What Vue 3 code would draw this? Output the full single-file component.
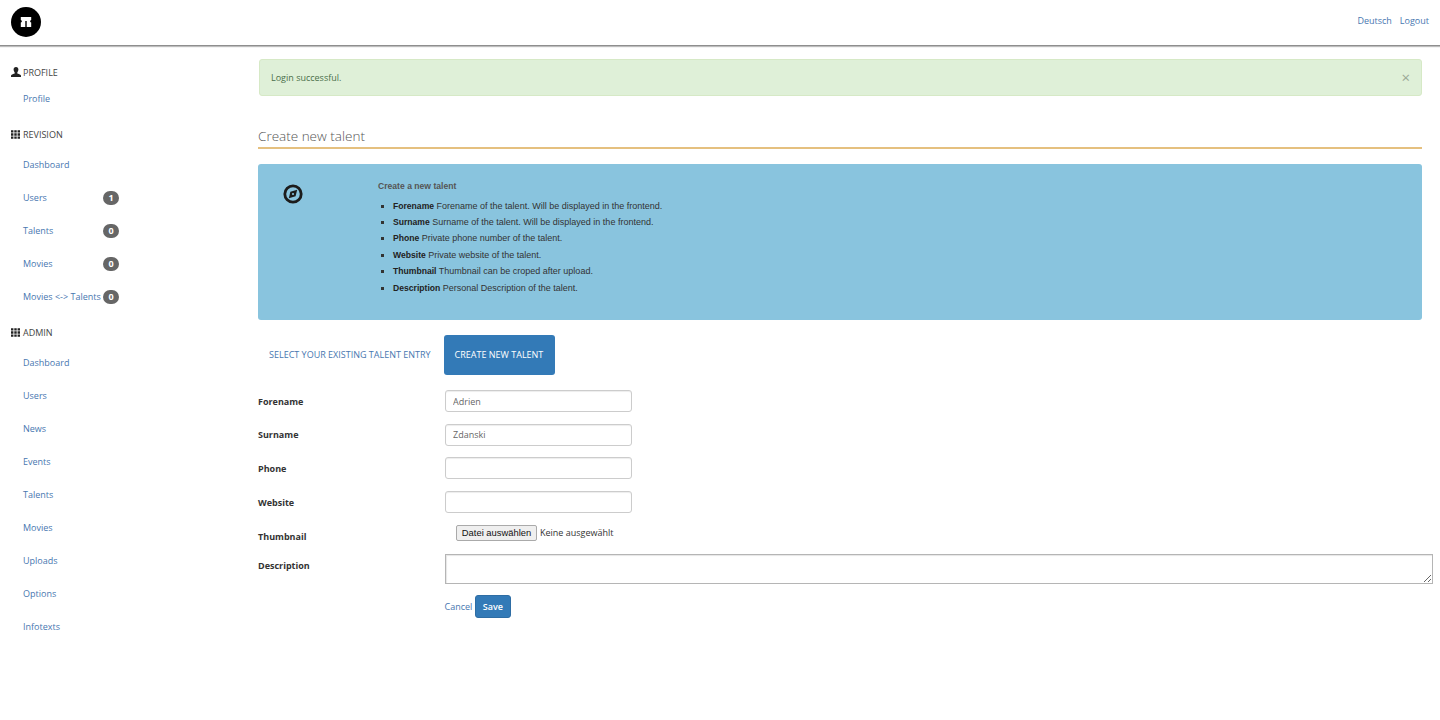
<script setup>
const revision = [
  { label: 'Dashboard' },
  { label: 'Users', badge: 1 },
  { label: 'Talents', badge: 0 },
  { label: 'Movies', badge: 0 },
  { label: 'Movies <-> Talents', badge: 0 },
]
const admin = ['Dashboard', 'Users', 'News', 'Events', 'Talents', 'Movies', 'Uploads', 'Options', 'Infotexts']
const help = [
  ['Forename', 'Forename of the talent. Will be displayed in the frontend.'],
  ['Surname', 'Surname of the talent. Will be displayed in the frontend.'],
  ['Phone', 'Private phone number of the talent.'],
  ['Website', 'Private website of the talent.'],
  ['Thumbnail', 'Thumbnail can be croped after upload.'],
  ['Description', 'Personal Description of the talent.'],
]
const gridPath = 'M0 .2h2.700v2.700H0zM3.650 .2h2.700v2.700H3.650zM7.300 .2H10v2.700H7.300zM0 3.650h2.700v2.700H0zM3.650 3.650h2.700v2.700H3.650zM7.300 3.650H10v2.700H7.300zM0 7.100h2.700v2.700H0zM3.650 7.100h2.700v2.700H3.650zM7.300 7.100H10v2.700H7.300z'
</script>

<template>
  <div class="page">
    <header class="top">
      <a class="logo" aria-label="Logo">
        <svg viewBox="0 0 30 30" width="30" height="30">
          <circle cx="15" cy="15" r="15" fill="#000" />
          <path d="M9.800 10h10.400v3c-.9.400-1.100 1-1 2l1 .4v4.600h-4.500v-6h-1.400v6H9.800v-4.600l1-.4c.1-1-.1-1.600-1-2z" fill="#fff" />
        </svg>
      </a>
      <nav class="top-links">
        <a>Deutsch</a>
        <a>Logout</a>
      </nav>
    </header>

    <div class="body">
      <aside class="side">
        <h4 class="side-head first">
          <svg viewBox="0 0 10 10" width="10" height="10"><path d="M5 0c1.600 0 2.400 1 2.400 2.600 0 1.200-.5 2.200-1.100 2.800v1c.9.400 3.200.8 3.700 2V10H0V8.400c.5-1.200 2.800-1.600 3.700-2v-1C3.100 4.800 2.600 3.800 2.600 2.600 2.600 1 3.400 0 5 0z" fill="#222" /></svg>
          PROFILE
        </h4>
        <ul class="side-list first-list">
          <li><a>Profile</a></li>
        </ul>

        <h4 class="side-head">
          <svg class="grid-ico" viewBox="0 0 10 10" width="9" height="9"><path :d="gridPath" fill="#222" /></svg>
          REVISION
        </h4>
        <ul class="side-list">
          <li v-for="item in revision" :key="item.label">
            <a>{{ item.label }}</a>
            <span v-if="item.badge !== undefined" class="badge">{{ item.badge }}</span>
          </li>
        </ul>

        <h4 class="side-head">
          <svg class="grid-ico" viewBox="0 0 10 10" width="9" height="9"><path :d="gridPath" fill="#222" /></svg>
          ADMIN
        </h4>
        <ul class="side-list">
          <li v-for="label in admin" :key="label"><a>{{ label }}</a></li>
        </ul>
      </aside>

      <main class="main">
        <div class="alert">
          <span>Login successful.</span>
          <span class="close">×</span>
        </div>

        <h2 class="title">Create new talent</h2>

        <section class="info">
          <div class="info-ico">
            <svg viewBox="0 0 20 20" width="20" height="20">
              <circle cx="10" cy="10" r="8.200" fill="none" stroke="#1c1c1c" stroke-width="2.800" />
              <path d="M14.200 5.800l-1.600 6.400L5.800 14.200l1.600-6.400z" fill="#1c1c1c" />
              <circle cx="10" cy="10" r="1.100" fill="#8ac4de" />
            </svg>
          </div>
          <div class="info-text">
            <strong class="info-title">Create a new talent</strong>
            <ul>
              <li v-for="row in help" :key="row[0]"><b>{{ row[0] }}</b> {{ row[1] }}</li>
            </ul>
          </div>
        </section>

        <div class="tabs">
          <a class="tab">SELECT YOUR EXISTING TALENT ENTRY</a>
          <a class="tab active">CREATE NEW TALENT</a>
        </div>

        <form class="form" @submit.prevent>
          <div class="row">
            <label>Forename</label>
            <input class="field" type="text" value="Adrien" />
          </div>
          <div class="row">
            <label>Surname</label>
            <input class="field" type="text" value="Zdanski" />
          </div>
          <div class="row">
            <label>Phone</label>
            <input class="field" type="text" />
          </div>
          <div class="row">
            <label>Website</label>
            <input class="field" type="text" />
          </div>
          <div class="row file-row">
            <label>Thumbnail</label>
            <div class="file">
              <button type="button" class="file-btn">Datei auswählen</button>
              <span>Keine ausgewählt</span>
            </div>
          </div>
          <div class="row desc-row">
            <label>Description</label>
            <textarea class="area"></textarea>
          </div>
          <div class="actions">
            <a>Cancel</a>
            <button type="submit" class="save">Save</button>
          </div>
        </form>
      </main>
    </div>
  </div>
</template>

<style>
html, body { margin: 0; background: #fff; }
</style>

<style scoped>
.page {
  font-family: "Open Sans", sans-serif;
  font-size: 9px;
  color: #333;
  min-height: 720px;
  overflow: hidden;
}
a { color: #4877b0; text-decoration: none; }
ul { list-style: none; margin: 0; padding: 0; }

.top {
  height: 45px;
  display: flex;
  align-items: center;
  justify-content: space-between;
  padding: 0 11px;
  border-bottom: 1px solid #8e8e8e;
  box-shadow: 0 1px 1px #bdbdbd;
  box-sizing: content-box;
}
.logo { display: block; height: 30px; margin-top: -1px; }
.top-links { display: flex; gap: 8px; margin-top: -5px; }

.body { display: flex; }
.side { width: 258px; flex: none; padding: 0 0 0 11px; box-sizing: border-box; }
.side-head {
  display: flex;
  align-items: center;
  gap: 2px;
  margin: 12px 0 0;
  height: 14px;
  font-weight: 400;
  font-size: 9px;
  color: #444;
}
.side-head.first { margin-top: 19px; }
.grid-ico { margin-right: 1px; }
.side-list { margin-top: 7px; }
.side-list.first-list { margin-top: 3px; }
.side-list li {
  display: flex;
  align-items: center;
  justify-content: space-between;
  box-sizing: border-box;
  width: 108px;
  height: 33px;
  padding-left: 12px;
}
.badge {
  width: 16px;
  height: 14px;
  border-radius: 7px;
  background: #666;
  color: #fff;
  font-weight: 700;
  font-size: 9px;
  line-height: 14px;
  text-align: center;
}

.main { width: 1164px; flex: none; padding-top: 13px; }
.alert {
  height: 35px;
  display: flex;
  align-items: center;
  justify-content: space-between;
  padding: 0 11px;
  margin-left: 1px;
  background: #dff0d8;
  border: 1px solid #d6e9c6;
  border-radius: 3px;
  color: #4a6f4a;
}
.close { font-size: 15px; color: #9aa896; margin-top: -1px; }
.title {
  margin: 30px 0 0;
  padding-bottom: 1px;
  font-size: 13.500px;
  font-weight: 300;
  line-height: 20px;
  color: #555;
  border-bottom: 2px solid #e5c07f;
}
.info {
  display: flex;
  margin-top: 15px;
  height: 156px;
  background: #89c4de;
  border-radius: 3px;
  font-family: "Liberation Sans", Arial, sans-serif;
}
.info-ico { width: 120px; flex: none; padding: 20px 0 0 25px; box-sizing: border-box; }
.info-text { padding-top: 17px; }
.info-title { display: block; color: #555; font-size: 8.600px; line-height: 11px; }
.info-text ul { margin-top: 5.500px; padding-left: 15px; list-style: square; }
.info-text li { line-height: 16.400px; color: #333; }
.info-text b { color: #222; font-size: 8.600px; }

.tabs { display: flex; gap: 2px; margin-top: 15px; }
.tab {
  height: 40px;
  line-height: 40px;
  padding: 0 11px;
  border-radius: 3px;
  font-size: 9px;
}
.tab.active { background: #337ab7; color: #fff; padding-right: 12px; }

.form { margin-top: 15px; }
.row { display: flex; align-items: center; height: 22px; margin-bottom: 11.700px; }
.row label { width: 186.500px; flex: none; font-weight: 700; color: #333; font-size: 9px; }
.field {
  width: 187.500px;
  height: 22px;
  box-sizing: border-box;
  padding: 0 7.500px;
  border: 1px solid #ccc;
  border-radius: 3px;
  box-shadow: inset 0 1px 1px rgba(0,0,0,.075);
  font: inherit;
  color: #666;
}
.file-row { height: 16px; margin-bottom: 13px; }
.file-row label { margin-top: 7px; }
.file { display: flex; align-items: center; gap: 3px; padding-left: 11.500px; }
.file-btn {
  height: 16px;
  width: 81px;
  padding: 0;
  font-family: "Liberation Sans", Arial, sans-serif;
  font-size: 9.400px;
  color: #111;
  background: #efefef;
  border: 1px solid #aaa;
  border-radius: 2px;
}
.desc-row { align-items: flex-start; height: 30px; margin-bottom: 11px; }
.desc-row label { margin-top: 5px; }
.area {
  width: 988.500px;
  height: 30px;
  flex: none;
  box-sizing: border-box;
  border: 1px solid #b5b5b5;
  border-radius: 0;
  box-shadow: inset 1px 1px 1px rgba(0,0,0,.1);
  margin: 0;
}
.actions { display: flex; align-items: center; gap: 2.500px; padding-left: 186.500px; }
.save {
  width: 36px;
  height: 23px;
  padding: 0;
  background: #337ab7;
  color: #fff;
  border: 1px solid #2e6da4;
  border-radius: 3px;
  font: 600 9px "Open Sans", sans-serif;
}
</style>
